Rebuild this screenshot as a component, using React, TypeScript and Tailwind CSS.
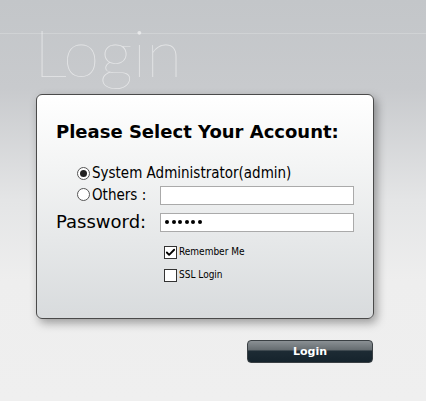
import { Check } from "lucide-react";

const Radio = ({ checked }: { checked?: boolean }) => (
  <span className="flex h-[13px] w-[13px] items-center justify-center rounded-full border border-[#555] bg-white">
    {checked && <span className="h-[7px] w-[7px] rounded-full bg-[#222]" />}
  </span>
);

const CheckBox = ({ checked }: { checked?: boolean }) => (
  <span className="flex h-[13px] w-[13px] items-center justify-center border border-[#333] bg-white">
    {checked && <Check className="h-[11px] w-[11px] text-black" strokeWidth={4} />}
  </span>
);

const App = () => {
  return (
    <div className="relative h-[401px] w-full overflow-hidden bg-[linear-gradient(to_bottom,#c3c6c9_0%,#c8cacd_22%,#e4e5e6_50%,#eeeeee_70%,#efefef_100%)]">
      {/* faint header rule */}
      <div className="absolute left-0 right-0 top-[33px] h-px bg-white/20" />

      {/* Page title */}
      <div className="h-[94px] pl-[34px] pt-[12px]">
        <h1 className="font-['Lato',sans-serif] text-[66px] font-thin leading-[80px] text-white/55">
          Login
        </h1>
      </div>

      {/* Account dialog */}
      <div className="ml-[36px] h-[225px] w-[338px] rounded-[6px] border border-[#4a4a4a] bg-[linear-gradient(to_bottom,#ffffff_0%,#f4f5f5_30%,#e6e8e9_65%,#d8dbdd_100%)] pl-[19px] pt-[25px] shadow-[3px_4px_10px_rgba(0,0,0,0.35)] font-['DejaVu_Sans_Condensed','DejaVu_Sans',sans-serif]">
        <h2 className="font-['DejaVu_Sans',sans-serif] text-[18px] font-bold leading-[24px] text-black">
          Please Select Your Account:
        </h2>

        <div className="mt-[20px] flex flex-col pl-[21px] text-[15px] leading-[18px] text-black">
          <label className="flex items-center gap-[2px]">
            <Radio checked />
            <span>System Administrator(admin)</span>
          </label>
          <label className="mt-[2px] flex items-center">
            <span className="flex items-center gap-[2px]">
              <Radio />
              <span>Others :</span>
            </span>
            <input className="ml-[14px] mt-[2px] h-[19px] w-[194px] border border-[#aaa] bg-white outline-none" />
          </label>
        </div>

        <div className="mt-[6px] flex items-center">
          <span className="w-[104px] font-['DejaVu_Sans',sans-serif] text-[18px] leading-[22px] text-black">
            Password:
          </span>
          <span className="flex h-[19px] w-[194px] items-center gap-[2.5px] border border-[#aaa] bg-white pl-[4px]">
            {[0, 1, 2, 3, 4, 5].map((i) => (
              <span key={i} className="h-[4px] w-[4px] rounded-full bg-black" />
            ))}
          </span>
        </div>

        <div className="ml-[108px] mt-[12px] flex flex-col gap-[9px] text-[10px] leading-[14px] text-black">
          <label className="flex items-center gap-[2px]">
            <CheckBox checked />
            <span>Remember Me</span>
          </label>
          <label className="flex items-center gap-[2px]">
            <CheckBox />
            <span>SSL Login</span>
          </label>
        </div>
      </div>

      {/* Login button */}
      <div className="ml-[247px] mt-[21px]">
        <button className="relative flex h-[23px] w-[126px] items-center justify-center overflow-hidden rounded-[4px] border border-[#3a4044] bg-[linear-gradient(to_bottom,#8a9094_0%,#666d71_42%,#1d2b34_48%,#15232c_100%)] pt-[2px] font-['DejaVu_Sans',sans-serif] text-[11px] font-bold text-white">
          Login
        </button>
      </div>
    </div>
  );
};

export default App;
